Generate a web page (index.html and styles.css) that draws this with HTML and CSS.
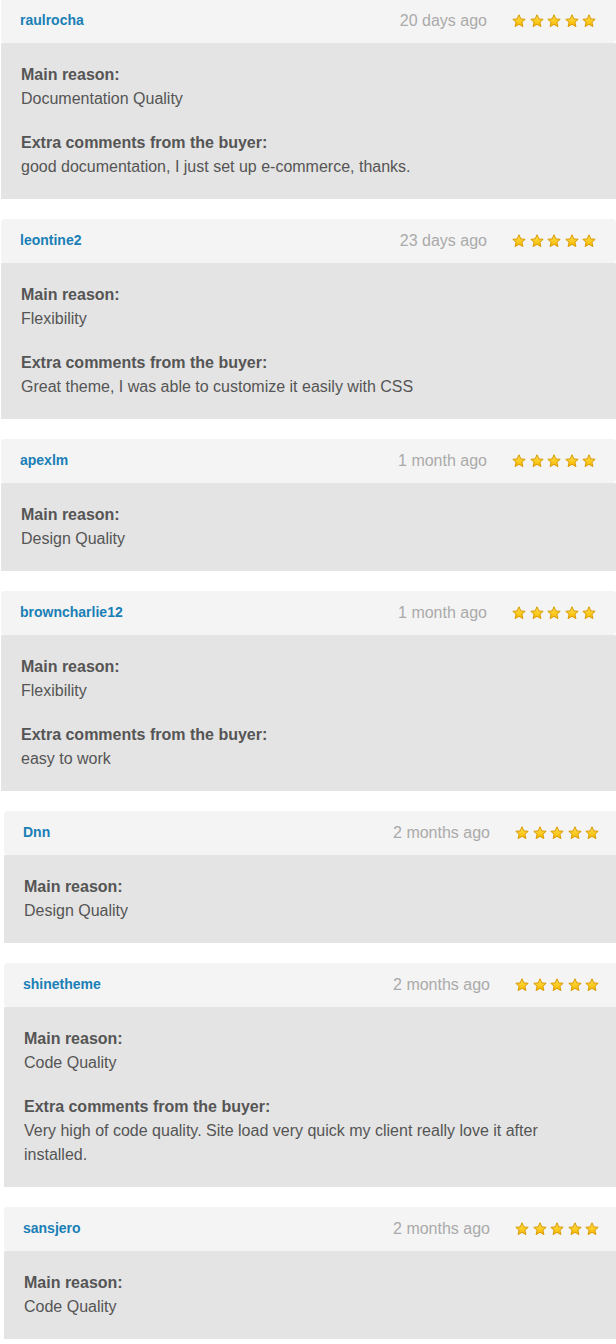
FILE: index.html
```html
<!DOCTYPE html>
<html>
<head>
<meta charset="utf-8">
<link rel="stylesheet" href="styles.css">
</head>
<body>
<svg width="0" height="0" class="defs">
  <defs>
    <linearGradient id="sg" x1="0" y1="0" x2="0" y2="1">
      <stop offset="0" stop-color="#ffe14a"/>
      <stop offset="1" stop-color="#f9b800"/>
    </linearGradient>
    <symbol id="star" viewBox="0 0 14 14">
      <path d="M7 0.8 L8.8 4.9 L13.2 5.3 L9.9 8.2 L10.9 12.6 L7 10.3 L3.1 12.6 L4.1 8.2 L0.8 5.3 L5.2 4.9 Z" fill="url(#sg)" stroke="#d99a00" stroke-width="1" stroke-linejoin="round"/>
    </symbol>
  </defs>
</svg>
<div class="list">

  <div class="review">
    <div class="head">
      <span class="user">raulrocha</span>
      <span class="date">20 days ago</span>
      <span class="stars"><svg><use href="#star"/></svg><svg><use href="#star"/></svg><svg><use href="#star"/></svg><svg><use href="#star"/></svg><svg><use href="#star"/></svg></span>
    </div>
    <div class="body">
      <div class="sec"><div class="label">Main reason:</div><div class="val">Documentation Quality</div></div>
      <div class="sec"><div class="label">Extra comments from the buyer:</div><div class="val">good documentation, I just set up e-commerce, thanks.</div></div>
    </div>
  </div>

  <div class="review">
    <div class="head">
      <span class="user">leontine2</span>
      <span class="date">23 days ago</span>
      <span class="stars"><svg><use href="#star"/></svg><svg><use href="#star"/></svg><svg><use href="#star"/></svg><svg><use href="#star"/></svg><svg><use href="#star"/></svg></span>
    </div>
    <div class="body">
      <div class="sec"><div class="label">Main reason:</div><div class="val">Flexibility</div></div>
      <div class="sec"><div class="label">Extra comments from the buyer:</div><div class="val">Great theme, I was able to customize it easily with CSS</div></div>
    </div>
  </div>

  <div class="review">
    <div class="head">
      <span class="user">apexlm</span>
      <span class="date">1 month ago</span>
      <span class="stars"><svg><use href="#star"/></svg><svg><use href="#star"/></svg><svg><use href="#star"/></svg><svg><use href="#star"/></svg><svg><use href="#star"/></svg></span>
    </div>
    <div class="body">
      <div class="sec"><div class="label">Main reason:</div><div class="val">Design Quality</div></div>
    </div>
  </div>

  <div class="review">
    <div class="head">
      <span class="user">browncharlie12</span>
      <span class="date">1 month ago</span>
      <span class="stars"><svg><use href="#star"/></svg><svg><use href="#star"/></svg><svg><use href="#star"/></svg><svg><use href="#star"/></svg><svg><use href="#star"/></svg></span>
    </div>
    <div class="body">
      <div class="sec"><div class="label">Main reason:</div><div class="val">Flexibility</div></div>
      <div class="sec"><div class="label">Extra comments from the buyer:</div><div class="val">easy to work</div></div>
    </div>
  </div>

  <div class="review shifted">
    <div class="head">
      <span class="user">Dnn</span>
      <span class="date">2 months ago</span>
      <span class="stars"><svg><use href="#star"/></svg><svg><use href="#star"/></svg><svg><use href="#star"/></svg><svg><use href="#star"/></svg><svg><use href="#star"/></svg></span>
    </div>
    <div class="body">
      <div class="sec"><div class="label">Main reason:</div><div class="val">Design Quality</div></div>
    </div>
  </div>

  <div class="review shifted">
    <div class="head">
      <span class="user">shinetheme</span>
      <span class="date">2 months ago</span>
      <span class="stars"><svg><use href="#star"/></svg><svg><use href="#star"/></svg><svg><use href="#star"/></svg><svg><use href="#star"/></svg><svg><use href="#star"/></svg></span>
    </div>
    <div class="body">
      <div class="sec"><div class="label">Main reason:</div><div class="val">Code Quality</div></div>
      <div class="sec"><div class="label">Extra comments from the buyer:</div><div class="val">Very high of code quality. Site load very quick my client really love it after installed.</div></div>
    </div>
  </div>

  <div class="review shifted">
    <div class="head">
      <span class="user">sansjero</span>
      <span class="date">2 months ago</span>
      <span class="stars"><svg><use href="#star"/></svg><svg><use href="#star"/></svg><svg><use href="#star"/></svg><svg><use href="#star"/></svg><svg><use href="#star"/></svg></span>
    </div>
    <div class="body">
      <div class="sec"><div class="label">Main reason:</div><div class="val">Code Quality</div></div>
    </div>
  </div>

</div>
</body>
</html>
```

FILE: styles.css
```css
html, body {
  margin: 0;
  padding: 0;
  background: #ffffff;
  overflow: hidden;
}
body {
  font-family: "Liberation Sans", Arial, sans-serif;
  color: #555555;
}
.defs {
  position: absolute;
  width: 0;
  height: 0;
}
.list {
  display: flex;
  flex-direction: column;
  gap: 20px;
  margin-top: -1px;
}
.review {
  margin-left: 1px;
  width: 615px;
  flex: none;
}
.review.shifted {
  margin-left: 4px;
}
.head {
  height: 44px;
  box-sizing: border-box;
  background: #f4f4f4;
  border-radius: 4px;
  display: flex;
  align-items: center;
  padding: 0 20px 0 19px;
}
.user {
  font-weight: bold;
  font-size: 14px;
  color: #1a7fb6;
  flex: 1;
  margin-bottom: 3px;
}
.date {
  font-size: 16px;
  color: #aaaaaa;
  margin-right: 25px;
}
.stars {
  display: flex;
  gap: 3.5px;
  height: 14px;
}
.stars svg {
  width: 14px;
  height: 14px;
  display: block;
}
.body {
  background: #e4e4e4;
  padding: 20px;
  display: flex;
  flex-direction: column;
  gap: 20px;
  font-size: 16px;
  line-height: 24px;
}
.label {
  font-weight: bold;
}
```
